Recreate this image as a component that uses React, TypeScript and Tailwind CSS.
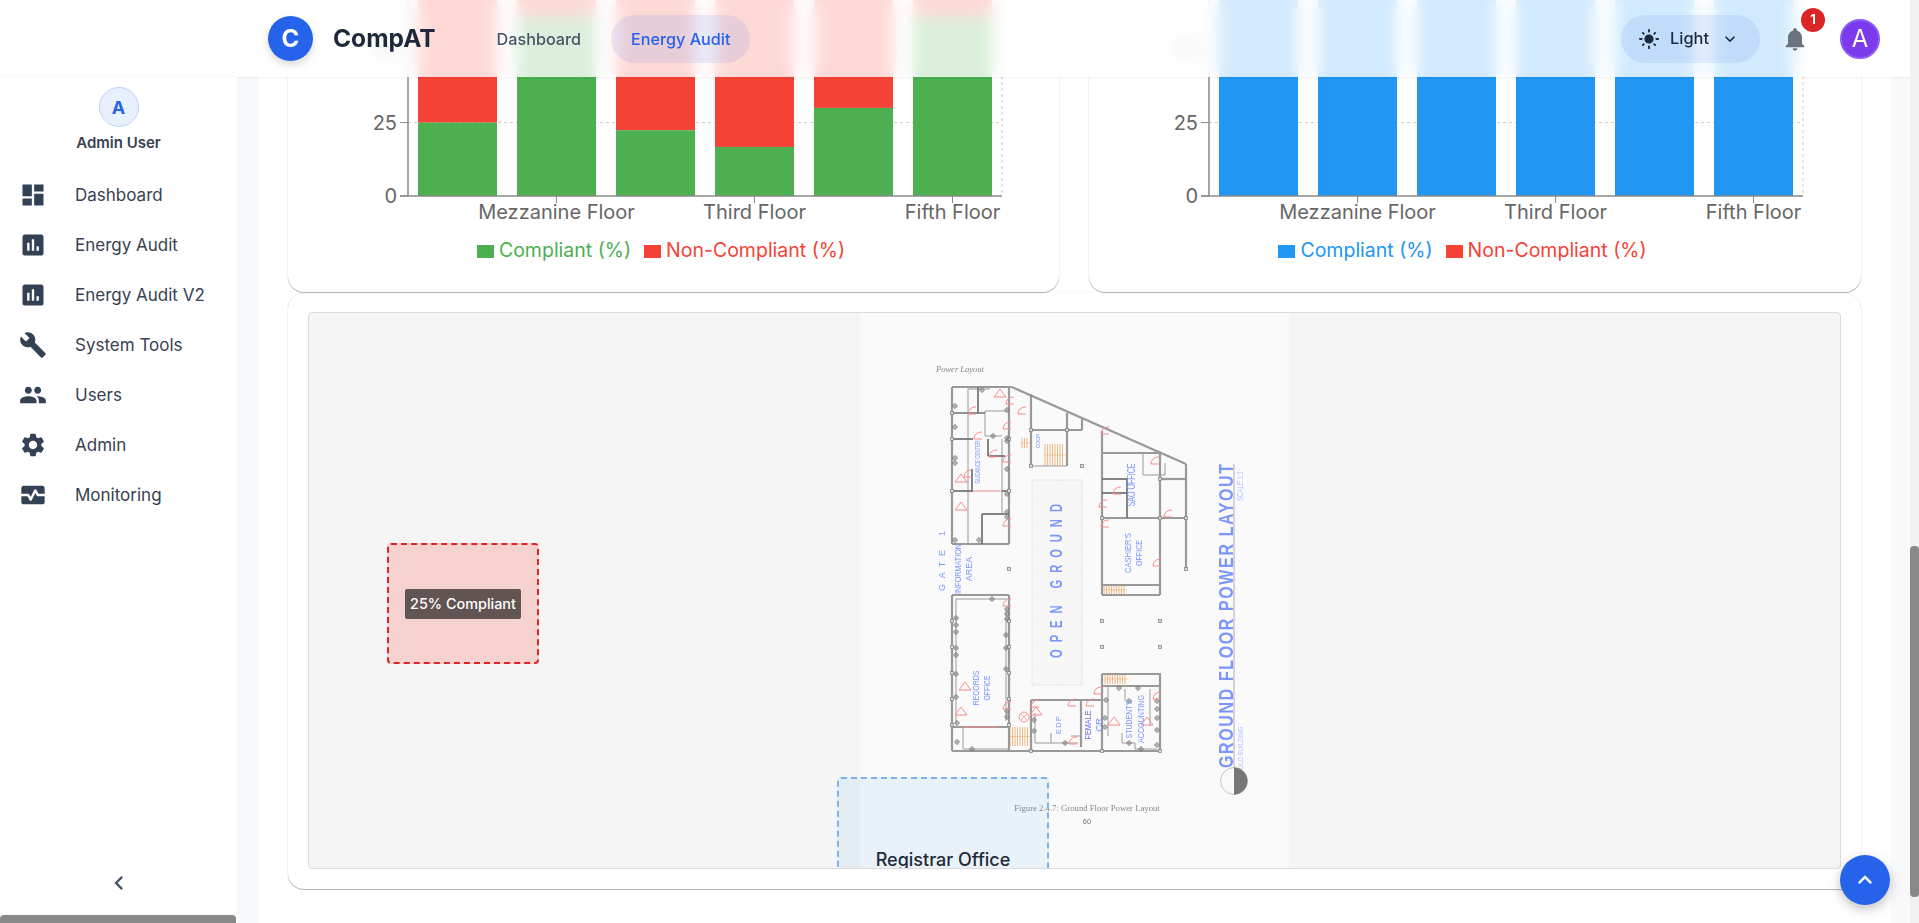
import { MdDashboard, MdAssessment, MdBuild, MdPeople, MdSettings, MdMonitorHeart, MdLightMode, MdNotifications, MdKeyboardArrowUp, MdKeyboardArrowDown, MdChevronLeft } from 'react-icons/md'

const navItems = [
    { label: 'Dashboard', icon: MdDashboard },
    { label: 'Energy Audit', icon: MdAssessment },
    { label: 'Energy Audit V2', icon: MdAssessment },
    { label: 'System Tools', icon: MdBuild },
    { label: 'Users', icon: MdPeople },
    { label: 'Admin', icon: MdSettings },
    { label: 'Monitoring', icon: MdMonitorHeart },
]

// chart scale: y=196 is 0, 2.936px per percent, same numbers as the page coordinates
const zeroY = 196
const unit = 2.936
const plotLeft = 120
const plotRight = 714
const step = 99

function Chart({ compliant, color }: { compliant: number[]; color: string }) {
    return (
        <svg width="771" height="358" viewBox="0 -130 771 358" className="block" style={{ fontFamily: 'Inter, sans-serif' }}>
            {[25, 50, 75, 100].map((v) => (
                <line key={v} x1={plotLeft} x2={plotRight} y1={zeroY - v * unit} y2={zeroY - v * unit} stroke="#ccc" strokeDasharray="3 3" />
            ))}
            <line x1={plotRight} x2={plotRight} y1={-98} y2={zeroY} stroke="#ccc" strokeDasharray="3 3" />
            {compliant.map((v, i) => {
                const x = plotLeft + 10 + i * step
                const h = v * unit
                return (
                    <g key={i}>
                        <rect x={x} y={zeroY - 100 * unit} width="79" height={(100 - v) * unit} fill="#f44336" />
                        <rect x={x} y={zeroY - h} width="79" height={h} fill={color} />
                    </g>
                )
            })}
            <line x1={plotLeft} x2={plotLeft} y1={-98} y2={zeroY} stroke="#888" strokeWidth="1.5" />
            <line x1={112} x2={plotRight} y1={zeroY} y2={zeroY} stroke="#888" strokeWidth="1.5" />
            {[0, 25, 50, 75, 100].map((v) => (
                <g key={v}>
                    <line x1={112} x2={plotLeft} y1={zeroY - v * unit} y2={zeroY - v * unit} stroke="#888" />
                    <text x={109} y={zeroY - v * unit + 7} textAnchor="end" fontSize="20" fill="#666">{v}</text>
                </g>
            ))}
            {[['Mezzanine Floor', 268.5], ['Third Floor', 466.5], ['Fifth Floor', 664.5]].map(([label, x]) => (
                <g key={label as string}>
                    <line x1={x as number} x2={x as number} y1={zeroY} y2={zeroY + 7} stroke="#888" />
                    <text x={x as number} y={zeroY + 23} textAnchor="middle" fontSize="20" fill="#666">{label}</text>
                </g>
            ))}
        </svg>
    )
}

function Legend({ color }: { color: string }) {
    return (
        <div className="flex justify-center items-center pr-[25px] h-[22px] mt-[12px] text-[19.5px] font-['Inter',sans-serif] leading-none">
            <span className="w-[17px] h-[13px]" style={{ backgroundColor: color }}></span>
            <span className="ml-[5px]" style={{ color }}>Compliant (%)</span>
            <span className="w-[17px] h-[13px] ml-[13px] bg-[#f44336]"></span>
            <span className="ml-[5px] text-[#f44336]">Non-Compliant (%)</span>
        </div>
    )
}

const thickWalls = [
    [952, 386, 1011.7, 386], [1011.7, 386, 1186, 463], [952, 386, 952, 543], [1009, 386, 1009, 543], [952, 543, 1009, 543],
    [1031, 393, 1031, 465], [1067, 412, 1067, 465], [1082, 418, 1082, 429], [1031, 429, 1082, 429],
    [1102, 430, 1102, 594], [1102, 452, 1160, 452], [1160, 452, 1160, 594], [1160, 478, 1186, 478], [1186, 463, 1186, 568],
    [1102, 517, 1186, 517], [1102, 584, 1160, 584], [1102, 594, 1160, 594],
    [952, 594, 952, 750], [952, 594, 1009, 594], [1009, 594, 1009, 750], [952, 750, 1160, 750], [952, 726, 1009, 726],
    [1031, 699, 1031, 750], [1031, 699, 1102, 699], [1081, 699, 1081, 746], [1102, 685, 1102, 750],
    [1102, 685, 1160, 685], [1102, 673, 1160, 673], [1160, 672, 1160, 750], [1102, 673, 1102, 685],
]
const darkWalls = [
    [978, 386, 978, 412], [952, 412, 985, 412], [952, 438, 973, 438], [988, 438, 988, 455], [988, 455, 1005, 455], [982, 513, 982, 543], [982, 513, 1009, 513], [952, 490, 973, 490], [1002, 490, 1009, 490], [972, 468, 972, 490], [1102, 478, 1127, 478], [1127, 478, 1127, 517], [1102, 492, 1127, 492],
]
const thinWalls = [
    [968, 388, 968, 542], [968, 388, 990, 388], [985, 410, 1007, 410], [985, 410, 985, 435], [985, 435, 1002, 435], [1002, 438, 1002, 513],
    [1143, 452, 1143, 474], [1143, 474, 1165, 474], [1165, 462, 1165, 474], [1031, 465, 1067, 465], [956, 598, 1007, 598], [956, 598, 956, 722], [1006, 608, 1006, 720], [963, 726, 963, 748], [963, 748, 1009, 748],
    [1035, 742, 1078, 742], [1035, 712, 1035, 742], [1051, 732, 1051, 742], [1071, 735, 1081, 735], [1108, 686, 1108, 735], [1125, 688, 1125, 700], [1150, 688, 1150, 725], [1122, 732, 1122, 742], [1122, 742, 1135, 742], [1135, 742, 1135, 748], [1135, 748, 1157, 748],
]
const doors = [
    [1010, 400], [1022, 410], [972, 410], [1007, 425], [978, 435], [993, 453], [1007, 458], [1007, 522], [968, 473], [1105, 430], [1155, 460], [1117, 490], [1103, 503], [1105, 523], [1168, 513], [1157, 562],
    [1007, 602], [1007, 705], [1035, 703], [1072, 702], [1090, 702], [1098, 690], [1157, 695], [1073, 740],
]
const alarms = [[1000, 392], [961, 477], [961, 505], [965, 685], [961, 710], [1036, 710], [1114, 720], [1147, 720]]
const lamps = [
    [982, 389], [955, 405], [1007, 409], [955, 426], [993, 435], [1007, 437], [1007, 440], [955, 457], [955, 462], [1007, 468], [1007, 493], [1007, 511], [1007, 516], [979, 539], [955, 539],
    [992, 598], [1007, 608], [1007, 613], [1007, 618], [956, 617], [956, 624], [956, 631], [956, 647], [956, 654], [956, 673], [956, 696], [1006, 634], [1006, 647], [1006, 668], [1007, 710], [1007, 716], [957, 722], [957, 741], [972, 748], [1034, 719], [1034, 730], [1065, 742], [1106, 699], [1105, 717], [1105, 726], [1119, 687], [1138, 687], [1129, 700], [1129, 742], [1141, 748], [1157, 700], [1157, 708], [1157, 717], [1157, 729], [1157, 744],
]
const columns = [[1009, 568], [1186, 568], [1102, 620], [1160, 620], [1102, 646], [1160, 646], [1082, 465], [1031, 465], [1031, 429], [1067, 429], [1102, 517], [1160, 517], [1186, 517], [1160, 478], [952, 412], [952, 438], [952, 490], [1009, 438], [1009, 490], [952, 620], [952, 646], [952, 672], [952, 698], [952, 724], [1009, 620], [1009, 646], [1009, 672], [1009, 698], [1009, 724], [1031, 750], [1102, 750], [1160, 750]]
const stairs = [[1045, 443, 22, 22], [1022, 437, 8, 10], [1104, 584, 23, 10], [1105, 673, 23, 10], [1010, 726, 20, 19]]

function Vertical({ x, y, size, children, fill = '#7b97fb', length, squeeze, weight, narrow = 1 }: { x: number; y: number; size: number; children: string; fill?: string; length?: number; squeeze?: boolean; weight?: number; narrow?: number }) {
    return (
        <text transform={`translate(${x} ${y}) rotate(-90) scale(${narrow} 1)`} textAnchor="middle" fontSize={size} fill={fill} textLength={length ? length / narrow : undefined} lengthAdjust={squeeze ? 'spacingAndGlyphs' : 'spacing'} fontWeight={weight} fontFamily="'Liberation Sans', sans-serif">
            {children}
        </text>
    )
}

function FloorPlan() {
    return (
        <svg width="429" height="557" viewBox="860 312 429 557" className="block blur-[0.35px]">
            <rect x="1032" y="479" width="50" height="205" fill="#f7f7f7" stroke="#e0e0e0" strokeDasharray="2 1" />
            {stairs.map(([x, y, w, h], i) => (
                <g key={i}>
                    {Array.from({ length: Math.floor(w / 2.5) }).map((_, k) => (
                        <line key={k} x1={x + k * 2.5} x2={x + k * 2.5} y1={y} y2={y + h} stroke="#f0b070" strokeWidth="0.9" />
                    ))}
                    <line x1={x} x2={x + w} y1={y + h / 2} y2={y + h / 2} stroke="#f0b070" strokeWidth="0.6" />
                </g>
            ))}
            {thinWalls.map(([a, b, c, d], i) => <line key={i} x1={a} y1={b} x2={c} y2={d} stroke="#9a9a9a" strokeWidth="1" />)}
            {thickWalls.map(([a, b, c, d], i) => <line key={i} x1={a} y1={b} x2={c} y2={d} stroke="#999" strokeWidth="2.2" />)}
            {darkWalls.map(([a, b, c, d], i) => <line key={i} x1={a} y1={b} x2={c} y2={d} stroke="#707070" strokeWidth="1.7" />)}
            <line x1="973" y1="490" x2="1002" y2="490" stroke="#f78a8a" strokeWidth="1" />
            <line x1="963" y1="726" x2="998" y2="726" stroke="#f78a8a" strokeWidth="1" />
            {columns.map(([x, y], i) => <rect key={i} x={x - 1.5} y={y - 1.5} width="3" height="3" fill="#ddd" stroke="#888" strokeWidth="0.8" />)}
            {lamps.map(([x, y], i) => (
                <g key={i} stroke="#808080" strokeWidth="0.7" fill="none">
                    <circle cx={x} cy={y} r="2" />
                    <line x1={x - 3} x2={x + 3} y1={y} y2={y} />
                    <line x1={x} x2={x} y1={y - 3} y2={y + 3} />
                </g>
            ))}
            {doors.map(([x, y], i) => <path key={i} d={`M${x - 4} ${y + 3} a7 7 0 0 1 7 -7 l1 0 M${x - 4} ${y + 3} l8 0`} fill="none" stroke="#f78a8a" strokeWidth="1" />)}
            {alarms.map(([x, y], i) => <polygon key={i} points={`${x - 6},${y + 4} ${x},${y - 4} ${x + 6},${y + 4}`} fill="none" stroke="#f78a8a" strokeWidth="1" />)}
            <circle cx="1024" cy="716" r="5" fill="none" stroke="#f78a8a" strokeWidth="0.9" />
            <path d="M1020.5 712.5l7 7m0-7l-7 7" stroke="#f78a8a" strokeWidth="0.7" />

            <text x="936" y="371" fontSize="8.5" fontStyle="italic" fill="#888" fontFamily="'Liberation Serif', serif">Power Layout</text>
            <Vertical x={1062} y={580} size={16.5} length={154} weight={700} narrow={0.68}>OPEN GROUND</Vertical>
            <Vertical x={1233} y={615} size={21} length={304} weight={700} narrow={0.76}>GROUND FLOOR POWER LAYOUT</Vertical>
            <Vertical x={1243} y={485} size={9.5} fill="#b4c4fb" length={30} squeeze>SCALE 1:1</Vertical>
            <Vertical x={1243} y={747} size={8} fill="#b4c4fb" length={43} squeeze>OLD BUILDING</Vertical>
            <Vertical x={945} y={560} size={9} length={60}>GATE 1</Vertical>
            <Vertical x={961} y={568} size={9} length={50} squeeze>INFORMATION</Vertical>
            <Vertical x={972} y={568} size={9}>AREA</Vertical>
            <Vertical x={980} y={461} size={6.5} length={43} squeeze>GUIDANCE CENTER</Vertical>
            <Vertical x={1040} y={440} size={5}>COOP</Vertical>
            <Vertical x={1135} y={484} size={10} length={43} squeeze>SAO OFFICE</Vertical>
            <Vertical x={1131} y={552} size={9.5} length={40} squeeze>CASHIER'S</Vertical>
            <Vertical x={1142} y={552} size={9.5} length={26} squeeze>OFFICE</Vertical>
            <Vertical x={979} y={687} size={9.5} length={35} squeeze>RECORDS</Vertical>
            <Vertical x={990} y={687} size={9.5} length={25} squeeze>OFFICE</Vertical>
            <Vertical x={1061} y={724} size={7.5} length={18}>EDP</Vertical>
            <Vertical x={1091} y={724} size={9.5} fill="#7a6cf0" length={29} squeeze>FEMALE</Vertical>
            <Vertical x={1102} y={724} size={9.5}>CR</Vertical>
            <Vertical x={1132} y={718} size={9} length={39} squeeze>STUDENT'S</Vertical>
            <Vertical x={1144} y={718} size={9} length={48} squeeze>ACCOUNTING</Vertical>

            <line x1="1234" y1="463" x2="1234" y2="794" stroke="#999" strokeWidth="0.8" />
            <circle cx="1234" cy="780" r="13.5" fill="#fafafa" stroke="#aaa" strokeWidth="0.7" />
            <path d="M1234 766.5a13.5 13.5 0 0 1 0 27z" fill="#777" />
            <text x="1087" y="810" fontSize="8.7" textAnchor="middle" fill="#888" fontFamily="'Liberation Serif', serif">Figure 2.4.7: Ground Floor Power Layout</text>
            <text x="1087" y="823" fontSize="7.5" textAnchor="middle" fill="#777" fontFamily="'Liberation Sans', sans-serif">60</text>
        </svg>
    )
}

export default function App() {
    return (
        <div className="h-screen w-full flex overflow-hidden bg-[#f8f9fb] font-['Inter',sans-serif]">
            <aside className="relative w-[237px] shrink-0 h-full bg-white flex flex-col">
                <div className="h-[77px] shrink-0 border-b border-[#f8f8f8]"></div>
                <div className="h-[89px] shrink-0 flex flex-col items-center pt-[10px] border-b border-[#fbfbfb]">
                    <div className="w-[40px] h-[40px] rounded-full bg-[#e8effd] border border-[#bfd2fb] flex items-center justify-center text-[#2563eb] text-[18px] font-bold">A</div>
                    <div className="mt-[6px] text-[15px] leading-[20px] font-semibold text-[#374151]">Admin User</div>
                </div>
                <nav className="pt-[4px]">
                    {navItems.map((item) => (
                        <div key={item.label} className="h-[50px] flex items-center pl-[19px] text-[#374151]">
                            <item.icon className="w-[28px] h-[28px] text-[#334155]" />
                            <span className="ml-[28px] text-[17px] leading-[24px]">{item.label}</span>
                        </div>
                    ))}
                </nav>
                <div className="mt-auto flex justify-center pb-[18px]">
                    <MdChevronLeft className="w-[28px] h-[28px] text-[#475569]" />
                </div>
                <div className="h-[8px] shrink-0 mr-[1px] bg-[#888] rounded-t-[4px]"></div>
            </aside>

            <main className="relative flex-1 h-full overflow-hidden">
                <header className="absolute top-0 left-0 right-0 z-10 h-[77px] bg-white/80 backdrop-blur-sm shadow-[0_1px_2px_rgba(0,0,0,0.06)] flex items-center pl-[31px] pr-[30px]">
                    <div className="w-[45px] h-[45px] rounded-full bg-[#2563eb] text-white text-[24px] font-bold flex items-center justify-center shadow-[0_4px_8px_rgba(0,0,0,0.15)]">C</div>
                    <div className="ml-[20px] text-[24.5px] font-bold text-[#1e293b]">CompAT</div>
                    <div className="ml-[41px] pl-[20px] pr-[30px] text-[16.2px] leading-[48px] font-medium text-[#475569]">Dashboard</div>
                    <div className="px-[20px] h-[48px] rounded-full bg-[#2563eb]/10 text-[16.2px] leading-[48px] font-medium text-[#2563eb]">Energy Audit</div>
                    <div className="ml-auto h-[48px] w-[139px] rounded-full bg-[#2563eb]/10 flex items-center pl-[17px] text-[16.4px] font-medium text-[#1e293b]">
                        <MdLightMode className="w-[22px] h-[22px] text-[#1e293b]" />
                        <span className="ml-[10px]">Light</span>
                        <MdKeyboardArrowDown className="ml-[11px] w-[20px] h-[20px]" />
                    </div>
                    <div className="relative ml-[21px] w-[28px] h-[28px]">
                        <MdNotifications className="w-[28px] h-[28px] text-[#6b7280]" />
                        <span className="absolute -top-[17px] -right-[16px] w-[24px] h-[24px] rounded-full bg-[#dc2626] text-white text-[13px] font-bold flex items-center justify-center">1</span>
                    </div>
                    <div className="ml-[31px] w-[40px] h-[40px] rounded-full bg-[#7c3aed] border-2 border-[#8b5cf6] text-white text-[24px] flex items-center justify-center">A</div>
                </header>

                <div className="ml-[21px] mr-[19px] -mt-[130px] bg-white px-[30px] pb-[60px]">
                    <div className="grid grid-cols-[771px_772px] gap-[30px]">
                        <section className="h-[422px] bg-white rounded-b-2xl shadow-[0_1px_1px_rgba(0,0,0,0.28),0_0_1px_rgba(0,0,0,0.2)]">
                            <Chart compliant={[25, 61, 22.4, 16.7, 30, 61]} color="#4caf50" />
                            <Legend color="#4caf50" />
                        </section>
                        <section className="h-[422px] bg-white rounded-b-2xl shadow-[0_1px_1px_rgba(0,0,0,0.28),0_0_1px_rgba(0,0,0,0.2)]">
                            <Chart compliant={[100, 100, 100, 100, 100, 100]} color="#2196f3" />
                            <Legend color="#2196f3" />
                        </section>
                    </div>
                    <section className="mt-px bg-white rounded-2xl px-[20px] pt-[19px] pb-[20px] shadow-[0_1px_1px_rgba(0,0,0,0.28),0_0_1px_rgba(0,0,0,0.2)]">
                        <div className="relative h-[557px] rounded-[4px] border border-[#dcdcdc] bg-[#f5f5f5] overflow-hidden flex justify-center">
                            <div className="w-[429px] h-full bg-[#fafafa]">
                                <FloorPlan />
                            </div>
                            <div className="absolute left-[78px] top-[230px] w-[152px] h-[121px] rounded-[4px] border-2 border-dashed border-[#e02424] bg-[#f44336]/20 flex items-center justify-center">
                                <span className="px-[5px] h-[30px] rounded-[2px] bg-black/60 text-white text-[14.4px] font-medium leading-[30px]">25% Compliant</span>
                            </div>
                            <div className="absolute left-[528px] top-[464px] w-[212px] h-[165px] rounded-[4px] border-2 border-dashed border-[#7fb3e8] bg-[#2196f3]/8 flex items-center justify-center">
                                <span className="text-[18px] font-medium text-[#1f2937]">Registrar Office</span>
                            </div>
                        </div>
                    </section>
                </div>

                <button type="button" className="absolute left-[1603px] top-[855px] z-20 w-[50px] h-[50px] rounded-full bg-[#2563eb] text-white flex items-center justify-center shadow-[0_4px_12px_rgba(0,0,0,0.25)]">
                    <MdKeyboardArrowUp className="w-[28px] h-[28px]" />
                </button>
            </main>

            <div className="w-[9px] shrink-0 h-full bg-[#f1f1f1] pt-[546px]">
                <div className="h-[351px] bg-[#888] rounded-[4px]"></div>
            </div>
        </div>
    )
}
